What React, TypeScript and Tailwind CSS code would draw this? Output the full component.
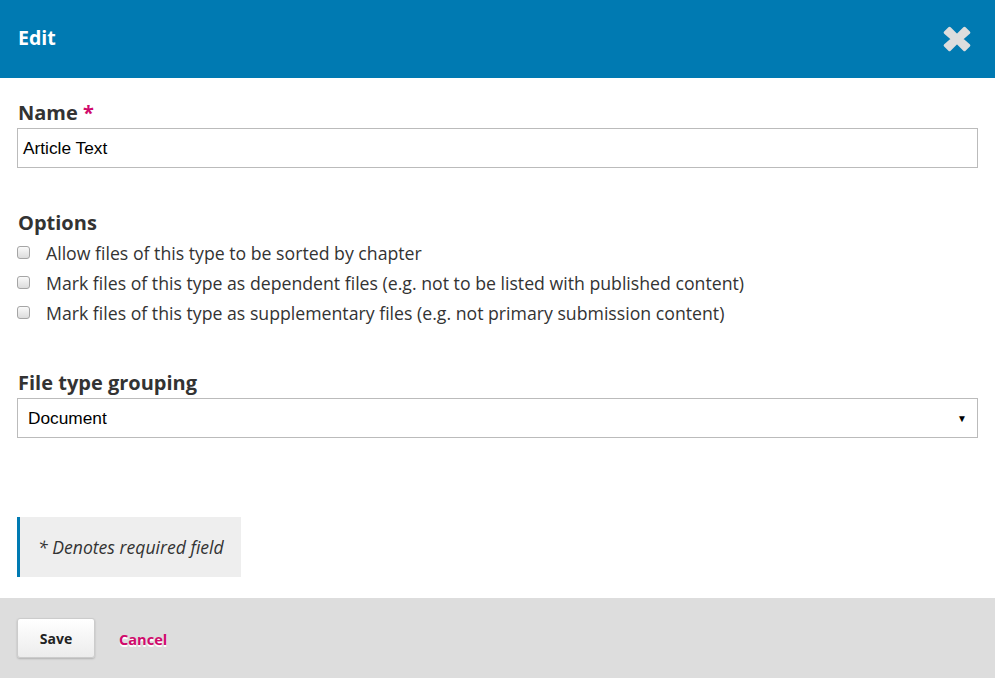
import React from "react";

const CloseIcon = () => (
  <svg width="32" height="30" viewBox="0 0 30 28" className="block">
    <path
      d="M4 8 L8 4 L15 11 L22 4 L26 8 L19 14 L26 20 L22 24 L15 17 L8 24 L4 20 L11 14 Z"
      fill="#dddddd"
      stroke="#dddddd"
      strokeWidth="3"
      strokeLinejoin="round"
    />
  </svg>
);

const Check = ({ label }: { label: string }) => (
  <label className="flex items-center h-[30px] text-[17.7px] text-[#333] pt-[2px]">
    <span className="w-[13px] h-[13px] rounded-[3px] border border-[#a5a5a5] bg-gradient-to-b from-[#fafafa] to-[#dcdcdc] mr-[16px] ml-[17px] -mt-[2px]" />
    <span>{label}</span>
  </label>
);

export default function App() {
  const sans = { fontFamily: '"Open Sans", "Noto Sans", sans-serif' };
  return (
    <div className="w-[995px] h-[678px] bg-white flex flex-col" style={sans}>
      {/* header */}
      <div className="h-[78px] bg-[#007ab2] flex items-center justify-between pl-[18px] pr-[22px] shrink-0">
        <span className="text-white font-bold text-[19.5px] pb-[2px]">Edit</span>
        <CloseIcon />
      </div>

      <div className="flex-1 flex flex-col">
        {/* name */}
        <div className="pt-[20px] px-[17px]">
          <div className="text-[20px] font-bold text-[#333] leading-[28px] pl-[1px] pt-[1px]">
            Name <span className="text-[#d00a6c]">*</span>
          </div>
          <div
            className="h-[40px] border border-[#bbb] flex items-center px-[5px] text-[17.3px] text-black mt-[1px] pt-[1px]"
            style={{ fontFamily: '"Liberation Sans", Arial, sans-serif' }}
          >
            Article Text
          </div>
        </div>

        {/* options */}
        <div className="mt-[41px]">
          <div className="text-[20px] font-bold text-[#333] leading-[28px] pl-[18px]">Options</div>
          <div className="flex flex-col">
            <Check label="Allow files of this type to be sorted by chapter" />
            <Check label="Mark files of this type as dependent files (e.g. not to be listed with published content)" />
            <Check label="Mark files of this type as supplementary files (e.g. not primary submission content)" />
          </div>
        </div>

        {/* grouping */}
        <div className="mt-[41px] px-[17px]">
          <div className="text-[20px] font-bold text-[#333] leading-[28px] pl-[1px] pt-[1px]">File type grouping</div>
          <div
            className="h-[40px] border border-[#bbb] flex items-center justify-between pl-[10px] pr-[10px] text-[17.3px] text-black mt-[1px] pt-[1px]"
            style={{ fontFamily: '"Liberation Sans", Arial, sans-serif' }}
          >
            <span>Document</span>
            <span className="text-[10px]">▼</span>
          </div>
        </div>

        {/* notice */}
        <div className="mt-[79px] px-[17px]">
          <div className="w-[224px] h-[60px] bg-[#eee] border-l-[3px] border-[#007ab2] flex items-center pl-[18px] text-[17.6px] italic text-[#333]">
            * Denotes required field
          </div>
        </div>
      </div>

      {/* footer */}
      <div className="h-[80px] bg-[#ddd] flex items-center px-[17px] gap-[24px] shrink-0">
        <button className="w-[78px] h-[40px] rounded-[3px] border border-[#ccc] bg-gradient-to-b from-[#fff] to-[#ececec] shadow-[0_1px_2px_rgba(0,0,0,0.2)] text-[14px] font-bold text-[#222]">
          Save
        </button>
        <span
          className="text-[14.6px] font-bold text-[#d00a6c] pt-[3px]"
          style={{ textShadow: "0 2px 0 #fff" }}
        >
          Cancel
        </span>
      </div>
    </div>
  );
}
